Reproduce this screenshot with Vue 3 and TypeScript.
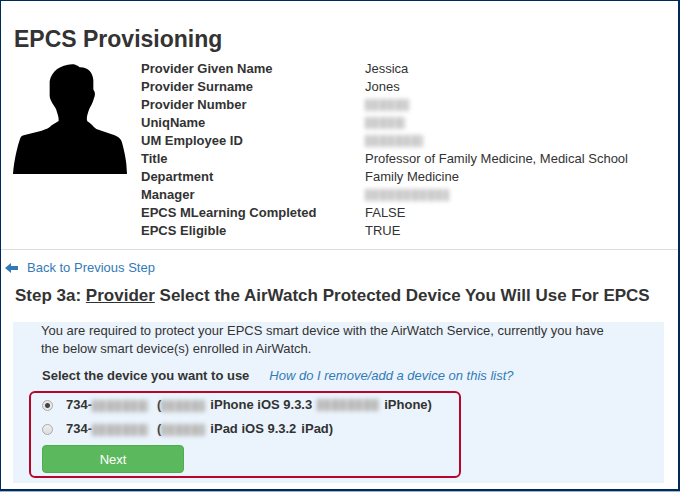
<script setup lang="ts">
import { ref } from 'vue'

interface Detail {
  label: string
  value?: string
  hiddenWidth?: number
}

interface Device {
  id: string
  prefix: string
  model: string
  ownerWidth?: number
  kind: string
}

const details: Detail[] = [
  { label: 'Provider Given Name', value: 'Jessica' },
  { label: 'Provider Surname', value: 'Jones' },
  { label: 'Provider Number', hiddenWidth: 44 },
  { label: 'UniqName', hiddenWidth: 40 },
  { label: 'UM Employee ID', hiddenWidth: 58 },
  { label: 'Title', value: 'Professor of Family Medicine, Medical School' },
  { label: 'Department', value: 'Family Medicine' },
  { label: 'Manager', hiddenWidth: 84 },
  { label: 'EPCS MLearning Completed', value: 'FALSE' },
  { label: 'EPCS Eligible', value: 'TRUE' },
]

const devices: Device[] = [
  { id: 'iphone', prefix: '734-', model: 'iPhone iOS 9.3.3', ownerWidth: 62, kind: 'iPhone)' },
  { id: 'ipad', prefix: '734-', model: 'iPad iOS 9.3.2', kind: 'iPad)' },
]

const selected = ref('iphone')
</script>

<template>
  <main class="page">
    <header class="provider">
      <h1>EPCS Provisioning</h1>
      <div class="profile">
        <svg class="avatar" viewBox="0 0 342 330" aria-hidden="true">
          <path
            d="M0 330 C3 292 12 250 22 222 C24 215 30 214 38 212 L86 200 Q106 195 116 184 L137 171 C138 158 133 150 129 135 C120 120 110 108 110 94 V52 C115 22 143 2 177 1 C190 1 195 7 200 10 C224 9 239 24 241 48 V76 C242 79 244 81 245 85 C248 93 243 101 240 112 C235 126 228 133 225 146 C222 154 220 166 223 172 C234 178 241 189 250 195 L305 214 C318 219 325 226 328 239 C333 259 338 279 340 300 L342 330 Z"
          />
        </svg>
        <dl class="details">
          <div v-for="row in details" :key="row.label" class="detail">
            <dt>{{ row.label }}</dt>
            <dd>
              <template v-if="row.value">{{ row.value }}</template>
              <span v-else class="masked" :style="{ width: row.hiddenWidth + 'px' }"></span>
            </dd>
          </div>
        </dl>
      </div>
    </header>

    <section class="step">
      <a class="back" href="#">
        <svg viewBox="0 0 14 12" aria-hidden="true"><path d="M0 6 L6 1 V4 H13 V8 H6 V11 Z" /></svg>
        <span>Back to Previous Step</span>
      </a>
      <h2>Step 3a: <u>Provider</u> Select the AirWatch Protected Device You Will Use For EPCS</h2>

      <form class="panel" @submit.prevent>
        <p class="intro">
          You are required to protect your EPCS smart device with the AirWatch Service, currently you have
          the below smart device(s) enrolled in AirWatch.
        </p>
        <div class="prompt">
          <strong id="device-prompt">Select the device you want to use</strong>
          <a href="#">How do I remove/add a device on this list?</a>
        </div>
        <div class="choices" role="radiogroup" aria-labelledby="device-prompt">
          <label v-for="device in devices" :key="device.id" class="choice" :for="device.id">
            <input :id="device.id" v-model="selected" type="radio" name="device" :value="device.id" />
            <span class="number">{{ device.prefix }}<span class="masked phone"></span></span>
            <span class="device">
              <span>(<span class="masked name"></span></span>
              <span>{{ device.model }}</span>
              <span v-if="device.ownerWidth" class="masked" :style="{ width: device.ownerWidth + 'px' }"></span>
              <span>{{ device.kind }}</span>
            </span>
          </label>
          <button class="next" type="submit">Next</button>
        </div>
      </form>
    </section>
  </main>
</template>

<style>
body {
  margin: 0;
  background: #9fb3c9;
}
</style>

<style scoped>
* {
  box-sizing: border-box;
}

.page {
  min-height: calc(100vh - 1px);
  border: 1px solid #002a5c;
  border-right-width: 2px;
  border-bottom-width: 2px;
  background: #fff;
  font-family: "Liberation Sans", Arial, sans-serif;
  font-size: 13px;
  line-height: 18px;
  color: #333;
}

.provider {
  padding: 24px 12px 9px;
  border-bottom: 1px solid #ddd;
}

h1 {
  margin: 0 1px 7px;
  font-size: 23px;
  line-height: 28px;
}

.profile {
  display: flex;
  align-items: flex-start;
  gap: 14px;
}

.avatar {
  flex: none;
  width: 114px;
  height: 110px;
  margin-top: 4px;
}

.details {
  flex: 1;
  margin: 0;
}

.detail {
  display: grid;
  grid-template-columns: 224px 1fr;
}

dt {
  font-weight: bold;
}

dd {
  display: flex;
  align-items: center;
  margin: 0;
}

.masked {
  display: inline-block;
  height: 12px;
  background: repeating-linear-gradient(90deg, #b4b4b4 0 4px, #c8c8c8 4px 7px, #bbb 7px 13px, #d0d0d0 13px 16px);
  filter: blur(2px);
}

.detail .masked {
  opacity: 0.75;
}

.step {
  padding: 9px 14px 6px 4px;
}

.back {
  display: flex;
  align-items: center;
  gap: 8px;
  color: #337ab7;
  text-decoration: none;
}

.back svg {
  width: 14px;
  height: 12px;
  fill: #337ab7;
}

h2 {
  margin: 8px 0 15px 10px;
  font-size: 17px;
  line-height: 22px;
}

.panel {
  margin-left: 8px;
  padding: 0 16px 5px;
  background: #ebf4fc;
}

.intro {
  margin: 0 24px 0 12px;
}

.prompt {
  display: flex;
  gap: 20px;
  margin: 9px 13px 6px;
}

.prompt a {
  color: #337ab7;
  font-style: italic;
  text-decoration: none;
}

.choices {
  display: flex;
  flex-direction: column;
  align-items: flex-start;
  width: 432px;
  max-width: 100%;
  padding: 0 11px 3px;
  border: 2px solid #b8062b;
  border-radius: 6px;
}

.choice {
  display: flex;
  align-items: center;
  height: 24px;
  font-weight: bold;
  white-space: nowrap;
}

.choice input {
  appearance: none;
  width: 11px;
  height: 11px;
  margin: 0 13px 0 0;
  border: 1px solid #aaa;
  border-radius: 50%;
  background: linear-gradient(#eee, #ddd);
}

.choice input:checked {
  background: radial-gradient(circle, #444 0 2px, #e8e8e8 3px);
}

.number {
  width: 91px;
}

.device {
  display: flex;
  align-items: center;
  gap: 5px;
}

.number .masked,
.name {
  vertical-align: middle;
}

.phone {
  width: 56px;
}

.name {
  width: 44px;
}

.next {
  width: 142px;
  height: 28px;
  margin-top: 4px;
  border: 1px solid #4cae4c;
  border-radius: 4px;
  background: #5cb85c;
  color: #fff;
  font-family: inherit;
  font-size: 13px;
}
</style>
